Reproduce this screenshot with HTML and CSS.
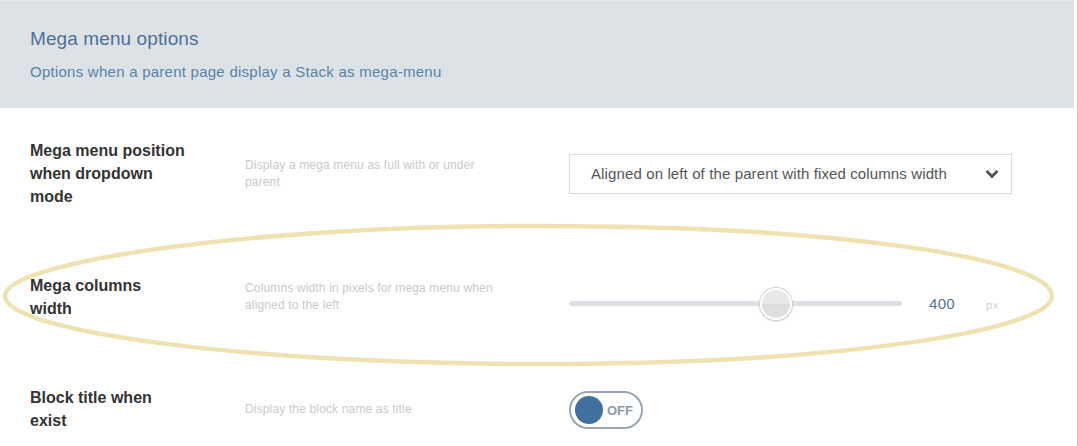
FILE: index.html
```html
<!DOCTYPE html>
<html lang="en">
<head>
<meta charset="utf-8">
<title>Mega menu options</title>
<link rel="stylesheet" href="styles.css">
</head>
<body>
<div class="page">
  <div class="header">
    <h2 class="title">Mega menu options</h2>
    <p class="subtitle">Options when a parent page display a Stack as mega-menu</p>
  </div>
  <div class="rows">
    <div class="row">
      <div class="label">Mega menu position when dropdown mode</div>
      <div class="desc">Display a mega menu as full with or under parent</div>
      <div class="control">
        <div class="select">
          <span class="select-text">Aligned on left of the parent with fixed columns width</span>
          <svg class="chevron" width="14" height="10" viewBox="0 0 14 10"><path d="M1.5 2 L7 7.5 L12.5 2" fill="none" stroke="#555" stroke-width="3"/></svg>
        </div>
      </div>
    </div>
    <div class="row">
      <div class="label">Mega columns width</div>
      <div class="desc">Columns width in pixels for mega menu when aligned to the left</div>
      <div class="control slider-ctl">
        <div class="track"><div class="thumb" style="left: 207px"></div></div>
        <span class="value">400</span>
        <span class="unit">px</span>
      </div>
    </div>
    <div class="row">
      <div class="label">Block title when exist</div>
      <div class="desc">Display the block name as title</div>
      <div class="control">
        <div class="toggle"><span class="knob"></span><span class="toggle-text">OFF</span></div>
      </div>
    </div>
  </div>
  <svg class="annotation" width="1078" height="446" viewBox="0 0 1078 446">
    <path d="M528 226 C 250 226, 5 262, 5 296 C 5 332, 250 365, 560 364 C 840 363, 1052 330, 1052 296 C 1052 258, 830 225, 528 226 Z" fill="none" stroke="#eee3b0" stroke-width="4.5"/>
  </svg>
</div>
</body>
</html>
```
FILE: styles.css
```css
* { box-sizing: border-box; }
html, body { margin: 0; padding: 0; background: #fff; }
body { font-family: "Liberation Sans", Arial, sans-serif; }

.page {
  position: relative;
  width: 1078px;
  height: 446px;
  overflow: hidden;
  border-right: 1px solid #c4c4c4;
  padding-right: 3px;
}

.header {
  background: #dde2e7;
  border-top: 1px solid #e5e8eb;
  border-bottom: 1px solid #e3e7eb;
  padding: 26px 30px 25px;
  height: 108px;
}
.title {
  margin: 0;
  font-size: 19px;
  line-height: 23px;
  font-weight: normal;
  color: #4e7095;
  letter-spacing: 0.1px;
}
.subtitle {
  margin: 12px 0 0;
  font-size: 15px;
  line-height: 20px;
  color: #5882ac;
  letter-spacing: 0.25px;
}

.row {
  display: flex;
  align-items: center;
  padding: 31px 0 35px 30px;
}
.label {
  width: 156px;
  margin-right: 59px;
  font-size: 16px;
  line-height: 23px;
  font-weight: bold;
  color: #333;
}
.desc {
  width: 260px;
  margin-right: 64px;
  font-size: 12px;
  line-height: 17px;
  color: #c9c9c9;
  letter-spacing: 0.15px;
}
.control { display: flex; align-items: center; }

.select {
  width: 443px;
  height: 40px;
  border: 1px solid #dcdcdc;
  display: flex;
  align-items: center;
  justify-content: space-between;
  padding: 0 12px 0 21px;
  background: #fff;
}
.select-text { font-size: 15px; color: #555; letter-spacing: 0.12px; }
.chevron { display: block; }

.slider-ctl { height: 40px; padding-top: 13px; }
.track {
  position: relative;
  width: 333px;
  height: 5px;
  border-radius: 3px;
  background: #dde1e6;
}
.thumb {
  position: absolute;
  top: -13px;
  width: 32px;
  height: 32px;
  margin-left: -16px;
  border-radius: 50%;
  border: 2px solid #fff;
  background: linear-gradient(#e8e8e8 0%, #e8e8e8 50%, #dcdcdc 51%, #e2e2e2 100%);
  box-shadow: 0 0 0 1px #c9d3dd, 0 1px 3px rgba(90,110,140,0.35);
}
.value {
  margin-left: 27px;
  font-size: 15px;
  color: #53728f;
  letter-spacing: 0.3px;
}
.unit {
  margin-left: 31px;
  font-size: 11px;
  color: #cfcfcf;
  margin-top: 3px;
  letter-spacing: 0.8px;
}

.toggle {
  width: 74px;
  height: 38px;
  border: 2px solid #98a6b4;
  border-radius: 19px;
  display: flex;
  align-items: center;
  padding-left: 4px;
  margin-top: 2px;
}
.knob {
  width: 28px;
  height: 28px;
  border-radius: 50%;
  background: #41709f;
}
.toggle-text {
  margin-left: 4px;
  font-size: 13px;
  font-weight: bold;
  color: #8c9aa8;
}

.annotation {
  position: absolute;
  left: 0;
  top: 0;
  pointer-events: none;
}
```
